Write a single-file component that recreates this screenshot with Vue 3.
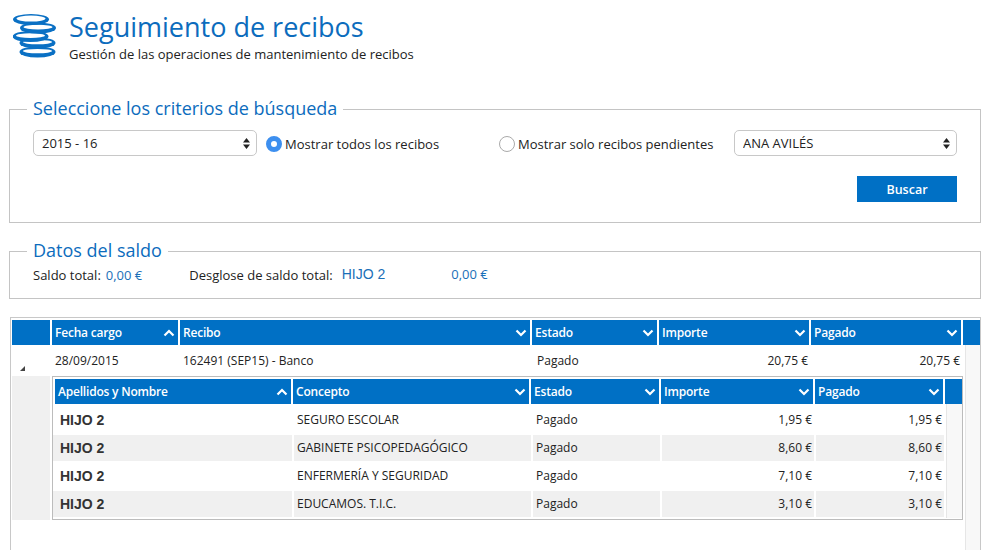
<script setup>
const mainCols = [
  { label: 'Fecha cargo', up: true },
  { label: 'Recibo' },
  { label: 'Estado' },
  { label: 'Importe' },
  { label: 'Pagado' }
]
const subCols = [
  { label: 'Apellidos y Nombre', up: true },
  { label: 'Concepto' },
  { label: 'Estado' },
  { label: 'Importe' },
  { label: 'Pagado' }
]
const rows = [
  { concept: 'SEGURO ESCOLAR', amount: '1,95 €' },
  { concept: 'GABINETE PSICOPEDAGÓGICO', amount: '8,60 €' },
  { concept: 'ENFERMERÍA Y SEGURIDAD', amount: '7,10 €' },
  { concept: 'EDUCAMOS. T.I.C.', amount: '3,10 €' }
]
const coins = [
  { x: 24.5, y: 39, ry: 2.2 },
  { x: 24.5, y: 30, ry: 2.2 },
  { x: 17.5, y: 23.5, ry: 2.4 },
  { x: 25, y: 15, ry: 2.4 },
  { x: 18, y: 6.5, ry: 3 }
]
</script>

<template>
  <div class="page">
    <header class="head">
      <svg class="logo" width="46" height="46" viewBox="0 0 46 46">
        <g v-for="(c, i) in coins" :key="i">
          <ellipse :cx="c.x" :cy="c.y" rx="18" ry="5.600" fill="#0a70c4" />
          <ellipse :cx="c.x" :cy="c.y - 0.9" rx="14.500" :ry="c.ry" fill="#fff" />
        </g>
      </svg>
      <div>
        <h1 class="title">Seguimiento de recibos</h1>
        <p class="sub">Gestión de las operaciones de mantenimiento de recibos</p>
      </div>
    </header>

    <fieldset class="box search">
      <legend>Seleccione los criterios de búsqueda</legend>
      <div class="filters">
        <div class="select year">
          <select><option>2015 - 16</option></select>
          <svg class="updown" width="7" height="11" viewBox="0 0 7 11" fill="#222"><path d="M3.500 0 7 4.500H0zM3.500 11 0 6.500h7z" /></svg>
        </div>
        <label class="radio all"><input type="radio" name="m" checked />Mostrar todos los recibos</label>
        <label class="radio pending"><input type="radio" name="m" />Mostrar solo recibos pendientes</label>
        <div class="select person">
          <select><option>ANA AVILÉS</option></select>
          <svg class="updown" width="7" height="11" viewBox="0 0 7 11" fill="#222"><path d="M3.500 0 7 4.500H0zM3.500 11 0 6.500h7z" /></svg>
        </div>
      </div>
      <div class="actions"><button type="button">Buscar</button></div>
    </fieldset>

    <fieldset class="box balance">
      <legend>Datos del saldo</legend>
      <div class="balance-row">
        <span>Saldo total:</span>
        <span class="blue total">0,00 €</span>
        <span class="breakdown">Desglose de saldo total:</span>
        <span class="blue child">HIJO 2</span>
        <span class="blue childtotal">0,00 €</span>
      </div>
    </fieldset>

    <section class="grid">
      <div class="cols main-cols hdr">
        <div class="th"></div>
        <div v-for="c in mainCols" :key="c.label" class="th">
          <span>{{ c.label }}</span>
          <svg width="12" height="8" viewBox="0 0 12 8" fill="none" stroke="#fff" stroke-width="2.200">
            <path :d="c.up ? 'M1.500 6.500 6 2l4.500 4.500' : 'M1.500 1.500 6 6l4.500-4.500'" />
          </svg>
        </div>
        <div class="th"></div>
      </div>
      <div class="grid-body">
        <div class="grid-main">
          <div class="cols main-cols data-row">
            <div class="expander"><i></i></div>
            <div class="date">28/09/2015</div>
            <div class="recibo">162491 (SEP15) - Banco</div>
            <div class="state">Pagado</div>
            <div class="num">20,75 €</div>
            <div class="num">20,75 €</div>
          </div>
          <div class="detail">
            <div class="detail-side"></div>
            <div class="sub-grid">
              <div class="cols sub-cols hdr">
                <div v-for="c in subCols" :key="c.label" class="th">
                  <span>{{ c.label }}</span>
                  <svg width="12" height="8" viewBox="0 0 12 8" fill="none" stroke="#fff" stroke-width="2.200">
                    <path :d="c.up ? 'M1.500 6.500 6 2l4.500 4.500' : 'M1.500 1.500 6 6l4.500-4.500'" />
                  </svg>
                </div>
                <div class="th"></div>
              </div>
              <div class="sub-body">
                <div class="sub-rows">
                  <div v-for="(r, i) in rows" :key="r.concept" class="cols sub-data" :class="{ odd: i % 2 === 1 }">
                    <div class="who">HIJO 2</div>
                    <div class="txt">{{ r.concept }}</div>
                    <div class="txt">Pagado</div>
                    <div class="amt">{{ r.amount }}</div>
                    <div class="amt">{{ r.amount }}</div>
                  </div>
                </div>
                <div class="gutter"></div>
              </div>
            </div>
          </div>
        </div>
        <div class="gutter"></div>
      </div>
    </section>
  </div>
</template>

<style>
html, body { margin: 0; background: #fff; overflow: hidden; }
</style>

<style scoped>
.page {
  width: 998px;
  height: 550px;
  overflow: hidden;
  font-family: "Open Sans", sans-serif;
  font-size: 13px;
  color: #222;
  box-sizing: border-box;
}
.head { display: flex; gap: 10px; padding: 12px 0 0 13px; height: 97px; box-sizing: border-box; }
.logo { display: block; margin-top: 1px; }
.title { margin: 0; font-size: 27px; line-height: 30px; font-weight: 400; color: #0c6cbd; }
.sub { margin: 3px 0 0; font-size: 13px; line-height: 18px; color: #222; }

.box {
  margin: 0 0 0 9px;
  width: 972px;
  box-sizing: border-box;
  border: 1px solid #c4c4c4;
  padding: 0 23px;
  min-width: 0;
}
.box legend {
  margin-left: -6px;
  padding: 0 6px 2px;
  font-size: 18px;
  line-height: 22px;
  color: #0c6cbd;
}
.search { height: 126px; }
.balance { height: 60px; margin-top: 16px; }

.filters { display: flex; align-items: center; padding-top: 9px; height: 26px; }
.select { position: relative; height: 26px; box-sizing: border-box; flex: none; }
.select select {
  appearance: none;
  width: 100%;
  height: 26px;
  box-sizing: border-box;
  border: 1px solid #c8c8c8;
  border-radius: 5px;
  background: #fff;
  padding: 0 8px;
  font: inherit;
  color: #222;
}
.updown { position: absolute; right: 7px; top: 8px; pointer-events: none; }
.year { width: 224px; }
.person { width: 223px; margin-left: 20px; }
.radio { display: flex; align-items: center; flex: none; white-space: nowrap; font-size: 13px; line-height: 18px; padding-top: 2px; }
.radio input {
  appearance: none;
  width: 16px;
  height: 16px;
  margin: 0 3px 0 0;
  box-sizing: border-box;
  border-radius: 50%;
  border: 1px solid #aaa;
  background: #fff;
}
.radio input:checked { border: 5px solid #3d8fef; }
.all { margin-left: 9px; width: 233px; }
.pending { width: 215px; }
.actions { display: flex; justify-content: flex-end; padding-top: 20px; }
.actions button {
  width: 100px;
  height: 26px;
  border: 0;
  background: #0070c5;
  color: #fff;
  font: 600 12.500px "Open Sans", sans-serif;
}

.balance-row { display: flex; align-items: center; font-size: 13px; line-height: 18px; margin-top: 3px; }
.blue { color: #1a6fb8; }
.total { margin-left: 5px; }
.breakdown { margin-left: 47px; }
.child { margin-left: 9px; font-family: "Liberation Sans", sans-serif; font-size: 14px; margin-top: -2px; }
.childtotal { margin-left: 66px; margin-top: -2px; }

.grid {
  margin: 18px 0 0 10px;
  width: 971px;
  box-sizing: border-box;
  border: 1px solid #c8c8c8;
  border-bottom: 0;
  padding: 2px 0 0 1px;
}
.cols { display: grid; column-gap: 2px; }
.main-cols { grid-template-columns: 38px 126px 350px 125px 150px 150px 17px; }
.sub-cols { grid-template-columns: 236px 236px 128px 152px 128px 17px; }
.hdr { height: 25px; }
.th {
  background: #0070c5;
  color: #fff;
  font-weight: 600;
  font-size: 12px;
  letter-spacing: -0.2px;
  line-height: 25px;
  padding: 0 3px;
  display: flex;
  align-items: center;
  justify-content: space-between;
  min-width: 0;
}
.grid-body { display: flex; height: 210px; }
.grid-main { width: 953px; }
.gutter { flex: 1; background: #f8f8f8; border-left: 1px solid #e6e6e6; }
.data-row { height: 31px; line-height: 32px; font-size: 12px; }
.expander { position: relative; }
.expander i {
  position: absolute;
  left: 8px;
  bottom: 6px;
  width: 0;
  height: 0;
  border-style: solid;
  border-width: 0 0 5px 5px;
  border-color: transparent transparent #444 transparent;
}
.date, .recibo { padding-left: 3px; }
.state { padding-left: 5px; }
.num { text-align: right; padding-right: 1px; }

.detail { display: flex; height: 144px; }
.detail-side { width: 38px; background: #f0f0f0; margin-right: 2px; }
.sub-grid {
  width: 911px;
  box-sizing: border-box;
  border: 1px solid #bcbcbc;
  padding-top: 2px;
}
.sub-cols.hdr { padding-left: 2px; }
.sub-body { display: flex; height: 114px; }
.sub-rows { width: 893px; padding-top: 3px; }
.sub-data {
  grid-template-columns: 239px 237px 127px 152px 128px;
  height: 26px;
  margin-bottom: 2px;
  line-height: 26px;
  font-size: 12px;
}
.sub-data.odd > div { background: #f0f0f0; }
.who { font-family: "Liberation Sans", sans-serif; font-weight: 700; font-size: 14px; padding-left: 7px; color: #333; }
.txt { padding-left: 3px; }
.amt { text-align: right; padding-right: 2px; }
</style>
